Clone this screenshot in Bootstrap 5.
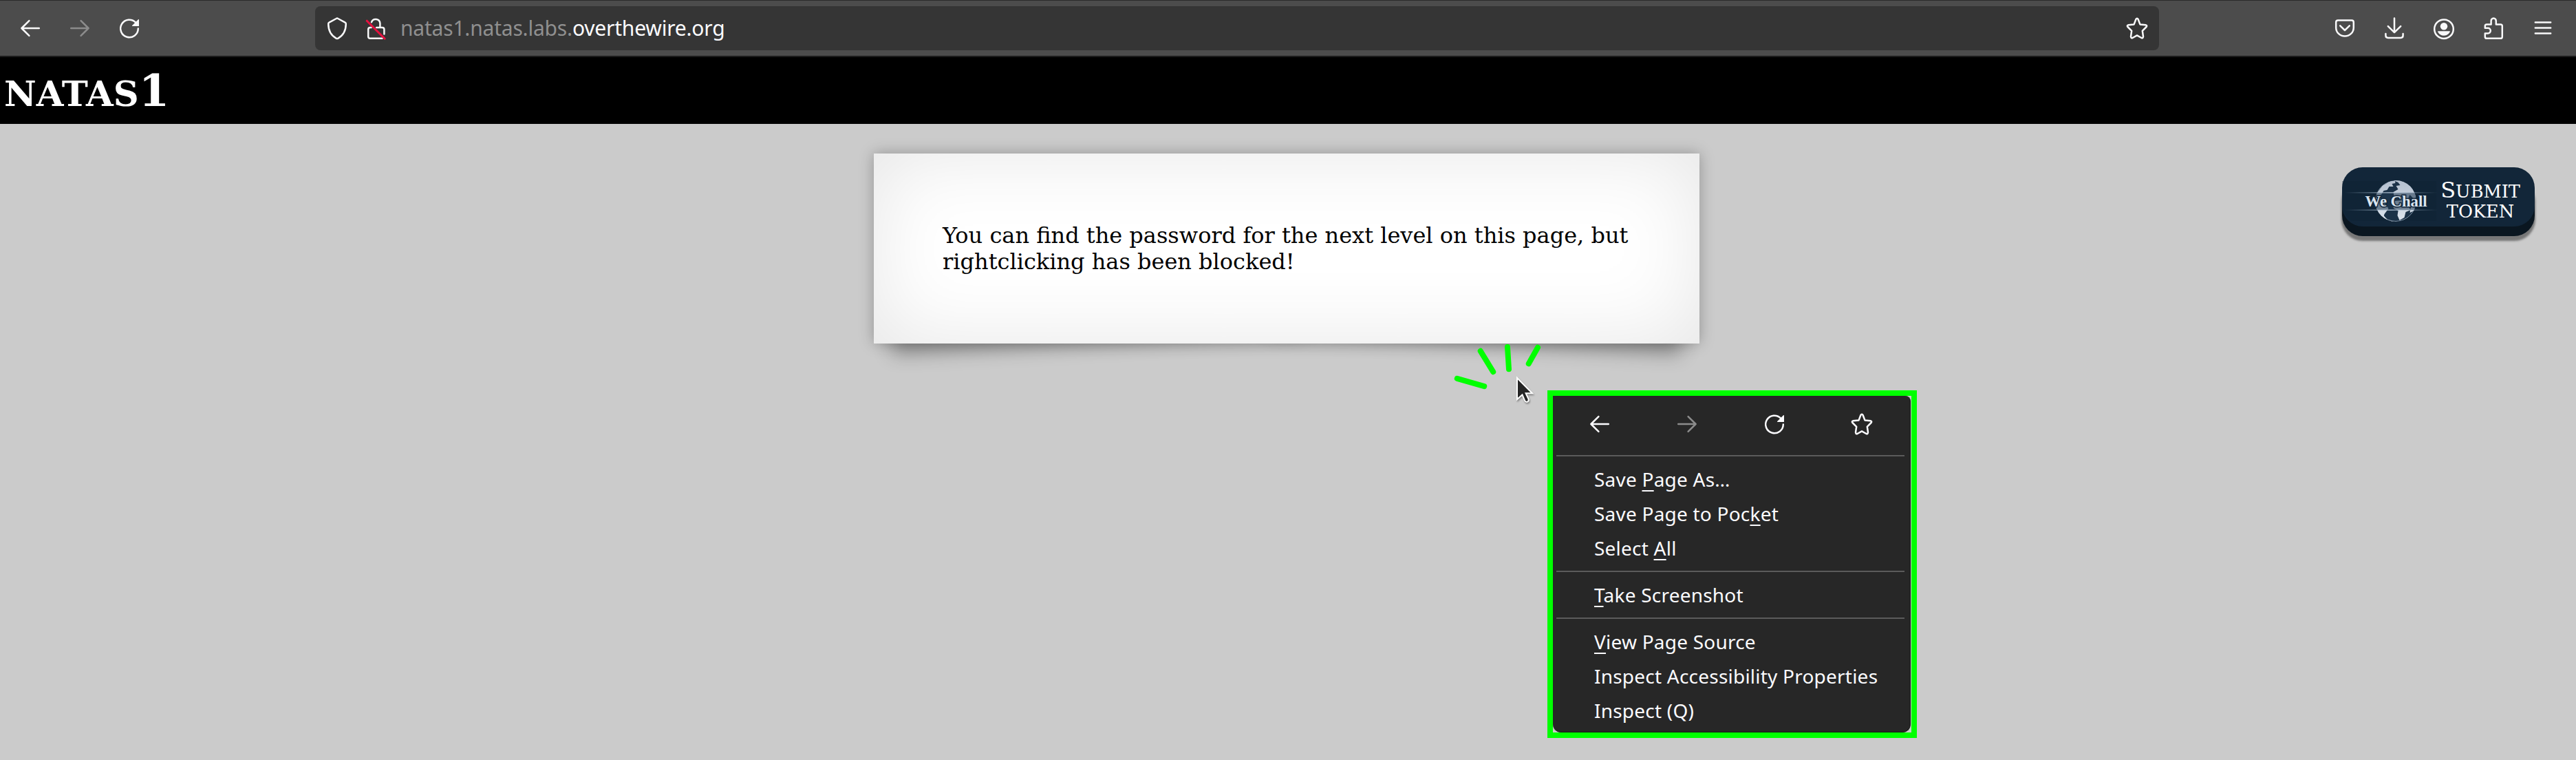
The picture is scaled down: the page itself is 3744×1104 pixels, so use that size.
<!DOCTYPE html>
<html lang="en">
<head>
<meta charset="utf-8">
<title>natas1</title>
<link href="https://cdn.jsdelivr.net/npm/bootstrap@5.3.0/dist/css/bootstrap.min.css" rel="stylesheet">
<style>
  body { background: #cbcbcb; color: #000; font-family: "DejaVu Serif", serif; overflow: hidden; height: 1104px; }
  svg { display: block; overflow: visible; }
  .ico { width: 32px; height: 32px; fill: none; stroke: currentColor; stroke-width: 1.25; stroke-linecap: round; stroke-linejoin: round; }

  .chrome-bar { height: 83px; background: #4c4c4c; border-top: 1px solid #2a2a2a; border-bottom: 2px solid #1b1b1b; color: #f9f9fa; padding: 0 12px 0 8px; }
  .tool { width: 72px; height: 64px; color: inherit; }
  .faded { color: #8c8c8c; }
  .url-box { height: 64px; margin: 0 234px; padding: 0 16px; background: #353535; border-radius: 8px; }
  .url-text { margin-left: 20px; font: 30px/64px "Noto Sans", sans-serif; letter-spacing: -.2px; color: #fbfbfe; white-space: nowrap; }
  .url-text span { color: #8f8f8f; }

  .level-title { height: 97px; background: #000; color: #fff; padding: 0 0 0 6px; font-size: 64px; font-weight: 700; line-height: 97px; }
  .level-title small { font-size: 51.2px; }

  .page-main { z-index: 0; padding: 43px 60px 0 1270px; }
  .paper { width: 1200px; padding: 100px; background: #fff; font-size: 32px; line-height: 38px; position: relative; box-shadow: 0 0 20px rgba(0,0,0,.28), inset 0 0 120px rgba(0,0,0,.1); }
  .paper::before, .paper::after { content: ""; position: absolute; z-index: -1; bottom: 30px; left: 24px; width: 50%; height: 55px; box-shadow: 0 30px 28px rgba(0,0,0,.32); transform: rotate(-3deg); }
  .paper::after { left: auto; right: 24px; transform: rotate(3deg); }

  .token-btn { width: 280px; height: 86px; margin-top: 20px; padding-top: 12px; border-radius: 30px; background: #122639; box-shadow: 0 14px #0a1620, 0 20px 3px 1px #777; color: #fff; }
  .token-label { width: 124px; margin-right: 17px; font-size: 25.6px; line-height: 29px; }
  .token-label big { font-size: 32px; line-height: 29px; }

  .ctx-frame { left: 2249px; top: 567px; width: 537px; height: 505px; border: 8px solid #0f0; background: #cbcbcb; z-index: 3; }
  .ctx { height: 489px; width: 520px; background: #272727; border-right: 1px solid #161616; border-bottom: 1px solid #161616; border-radius: 0 8px 12px 12px; color: #fbfbfe; font: 28px/50px "Noto Sans", sans-serif; letter-spacing: .22px; }
  .ctx-icons { height: 86px; padding-left: 4px; }
  .ctx-icons .ico { margin: 25px 47.5px 0; }
  .ctx hr { margin: 0 8px 0 5px; border: 0; height: 2px; background: #5b5b5b; opacity: 1; }
  .ctx ul { padding: 8px 0 8px 60px; white-space: nowrap; }
  .ctx u { text-decoration-thickness: 2px; text-underline-offset: 5px; text-decoration-skip-ink: none; }
  .clicks { left: 2100px; top: 490px; z-index: 4; }
</style>
<script src="https://cdn.jsdelivr.net/npm/bootstrap@5.3.0/dist/js/bootstrap.bundle.min.js"></script>
</head>
<body>

<svg width="0" height="0" class="position-absolute">
  <defs>
    <symbol id="i-back" viewBox="0 0 16 16"><path d="M14.4 8H1.7M7.2 2.6 1.7 8l5.5 5.4"/></symbol>
    <symbol id="i-fwd" viewBox="0 0 16 16"><path d="M1.6 8h12.7M8.8 2.6 14.3 8l-5.5 5.4"/></symbol>
    <symbol id="i-reload" viewBox="0 0 16 16"><path d="M14.4 8.3A6.4 6.4 0 1 1 12.6 3.8"/><path d="M14.7 1.8v4.4h-4.4z" fill="currentColor" stroke-width=".6"/></symbol>
    <symbol id="i-star" viewBox="0 0 16 16"><path d="M7.2 1.5Q8 .3 8.8 1.5L10.2 5.2 14.2 5.6Q15.6 5.9 14.8 7L11.9 9.9 12.5 14Q12.4 15.4 11.2 15L8 13.2 4.8 15Q3.6 15.4 3.5 14L4.1 9.9 1.2 7Q.4 5.9 1.8 5.6L5.8 5.2Z"/></symbol>
  </defs>
</svg>

<nav class="chrome-bar d-flex align-items-center">
  <a class="tool d-flex align-items-center justify-content-center"><svg class="ico"><use href="#i-back"/></svg></a>
  <a class="tool faded d-flex align-items-center justify-content-center"><svg class="ico"><use href="#i-fwd"/></svg></a>
  <a class="tool d-flex align-items-center justify-content-center"><svg class="ico"><use href="#i-reload"/></svg></a>
  <div class="url-box d-flex align-items-center flex-grow-1">
    <svg class="ico" viewBox="0 0 16 16" stroke="#e2e2e2"><path d="M8 .8Q8.3.8 8.6 1L13.8 3.8Q14.4 4.1 14.4 4.8C14.4 9.5 12.6 13.2 8.6 15.4Q8 15.7 7.4 15.4C3.4 13.2 1.6 9.5 1.6 4.8Q1.6 4.1 2.2 3.8L7.4 1Q7.7.8 8 .8Z"/></svg>
    <svg class="ico ms-4" viewBox="0 0 16 16"><path d="M5 3.6A3.2 3.2 0 0 1 11.2 4.4V7.4M8.6 7.5H12.8Q14.2 7.5 14.2 8.9V12.3M4.8 7.5H4Q2.6 7.5 2.6 8.9V14Q2.6 15.4 4 15.4H12.8"/><path stroke="#e6103f" stroke-width="1.5" d="M1.6 2.6 14.6 15.6"/></svg>
    <div class="url-text flex-grow-1"><span>natas1.natas.labs.</span>overthewire.org</div>
    <svg class="ico"><use href="#i-star"/></svg>
  </div>
  <a class="tool d-flex align-items-center justify-content-center"><svg class="ico" viewBox="0 0 16 16"><path d="M3 2.3H13Q14.4 2.3 14.4 3.7V7.6A6.4 6.2 0 0 1 1.6 7.6V3.7Q1.6 2.3 3 2.3ZM4.6 6.2 8 9.5 11.4 6.2"/></svg></a>
  <a class="tool d-flex align-items-center justify-content-center"><svg class="ico" viewBox="0 0 16 16"><path d="M8 .7V11M3.4 6.6 8 11.1 12.6 6.6M1.7 12V13.3Q1.7 15 3.4 15H12.6Q14.3 15 14.3 13.3V12"/></svg></a>
  <a class="tool d-flex align-items-center justify-content-center"><svg class="ico" viewBox="0 0 16 16"><circle cx="8" cy="8.6" r="6.9"/><g fill="currentColor" stroke="none"><circle cx="8" cy="6.6" r="2.6"/><path d="M3.8 10.1H12.2Q12.6 10.1 12.4 10.6A4.9 4.9 0 0 1 3.6 10.6Q3.4 10.1 3.8 10.1Z"/></g></svg></a>
  <a class="tool d-flex align-items-center justify-content-center"><svg class="ico" viewBox="0 0 16 16"><path d="M6.3 5.2V2.7A1.8 1.9 0 0 1 9.9 2.7V5.2H13.2Q14.4 5.2 14.4 6.4V14.2Q14.4 15.4 13.2 15.4H3.1Q1.9 15.4 1.9 14.2V11.7H4A1.9 1.9 0 0 0 4 7.9H1.9V6.4Q1.9 5.2 3.1 5.2Z"/></svg></a>
  <a class="tool d-flex align-items-center justify-content-center"><svg class="ico" viewBox="0 0 16 16"><path d="M2.4 3.7H13.6M2.4 7.7H13.6M2.4 11.7H13.6"/></svg></a>
</nav>

<h1 class="level-title m-0"><small class="fw-bold">NATAS</small>1</h1>

<main class="page-main position-relative d-flex align-items-start">
  <div class="paper">You can find the password for the next level on this page, but rightclicking has been blocked!</div>
  <a class="token-btn ms-auto d-flex align-items-center justify-content-between text-decoration-none">
    <svg width="138" height="62" viewBox="1.5 0 138 62">
      <defs>
        <linearGradient id="streak"><stop offset="0" stop-color="#7f98ad" stop-opacity="0"/><stop offset=".5" stop-color="#b9cadb"/><stop offset="1" stop-color="#7f98ad" stop-opacity="0"/></linearGradient>
        <linearGradient id="land" x2="0" y2="1"><stop offset="0" stop-color="#b4c0cf"/><stop offset="1" stop-color="#dde5ee"/></linearGradient>
        <clipPath id="ball"><circle cx="79.5" cy="31" r="30"/></clipPath>
      </defs>
      <path fill="#0d2134" opacity=".5" d="M2 2H138V60H16Q4 52 2 40z"/>
      <g clip-path="url(#ball)">
        <circle cx="79.5" cy="31" r="29.4" fill="#1b3248" stroke="#8496a8" stroke-width="1"/>
        <path fill="url(#land)" d="M49 34 52 20 60 9 70 3 78 1 79 5 74 6 76 10 70 10 67 15 62 16 59 21 56 24 58 30 65 36 69 42 63 50 61 57 52 50ZM76 1 92 1 103 11 109 24 107 29 100 22 98 26 101 32 96 35 91 29 86 30 82 24 77 24 76 18 83 14 80 9 86 8 83 4ZM77 31 88 30 97 37 101 44 94 47 92 55 85 59 82 52 83 45 77 42 74 36ZM51 43 63 44 62 52 68 59 77 61 65 61 54 52ZM102 36 109 34 106 45 100 48Z"/>
        <path fill="#1e374e" opacity=".55" d="M48 19H111V44H48z"/>
      </g>
      <path fill="url(#streak)" d="M5 18.2H140V19.4H5zM5 43.6H140V44.8H5z"/>
      <text x="35" y="38.5" textLength="90" lengthAdjust="spacingAndGlyphs" font-family="Liberation Serif, serif" font-weight="700" font-size="22.5" fill="#dbe5ef" stroke="#12263a" stroke-width="3" paint-order="stroke">We Chall</text>
    </svg>
    <div class="token-label text-center"><big>S</big>UBMIT<br>TOKEN</div>
  </a>
</main>

<svg class="clicks position-absolute" width="140" height="110" viewBox="2100 490 140 110">
  <path stroke="#0f0" stroke-width="8" stroke-linecap="round" d="M2117.8 549.8 2157.2 561.2M2151.7 509.8 2170.2 540.2M2191 504 2193 536.2M2235 504.8 2221.8 528.3"/>
  <path fill="#252525" stroke="#fff" stroke-width="2" d="M2205 549V580L2212.5 573.5 2216 581.6Q2217.6 584.8 2220.4 583.4 2222.6 582 2221.4 579.2L2217.6 571.3H2227Z" style="filter:drop-shadow(1px 2px 1px rgba(0,0,0,.35))"/>
</svg>

<div class="ctx-frame position-absolute">
  <div class="ctx">
    <div class="ctx-icons d-flex">
      <svg class="ico"><use href="#i-back"/></svg>
      <svg class="ico faded"><use href="#i-fwd"/></svg>
      <svg class="ico"><use href="#i-reload"/></svg>
      <svg class="ico"><use href="#i-star"/></svg>
    </div>
    <hr>
    <ul class="list-unstyled m-0">
      <li>Save <u>P</u>age As…</li>
      <li>Save Page to Poc<u>k</u>et</li>
      <li>Select <u>A</u>ll</li>
    </ul>
    <hr>
    <ul class="list-unstyled m-0"><li><u>T</u>ake Screenshot</li></ul>
    <hr>
    <ul class="list-unstyled m-0">
      <li><u>V</u>iew Page Source</li>
      <li>Inspect Accessibility Properties</li>
      <li>Inspect (Q)</li>
    </ul>
  </div>
</div>
</body>
</html>
